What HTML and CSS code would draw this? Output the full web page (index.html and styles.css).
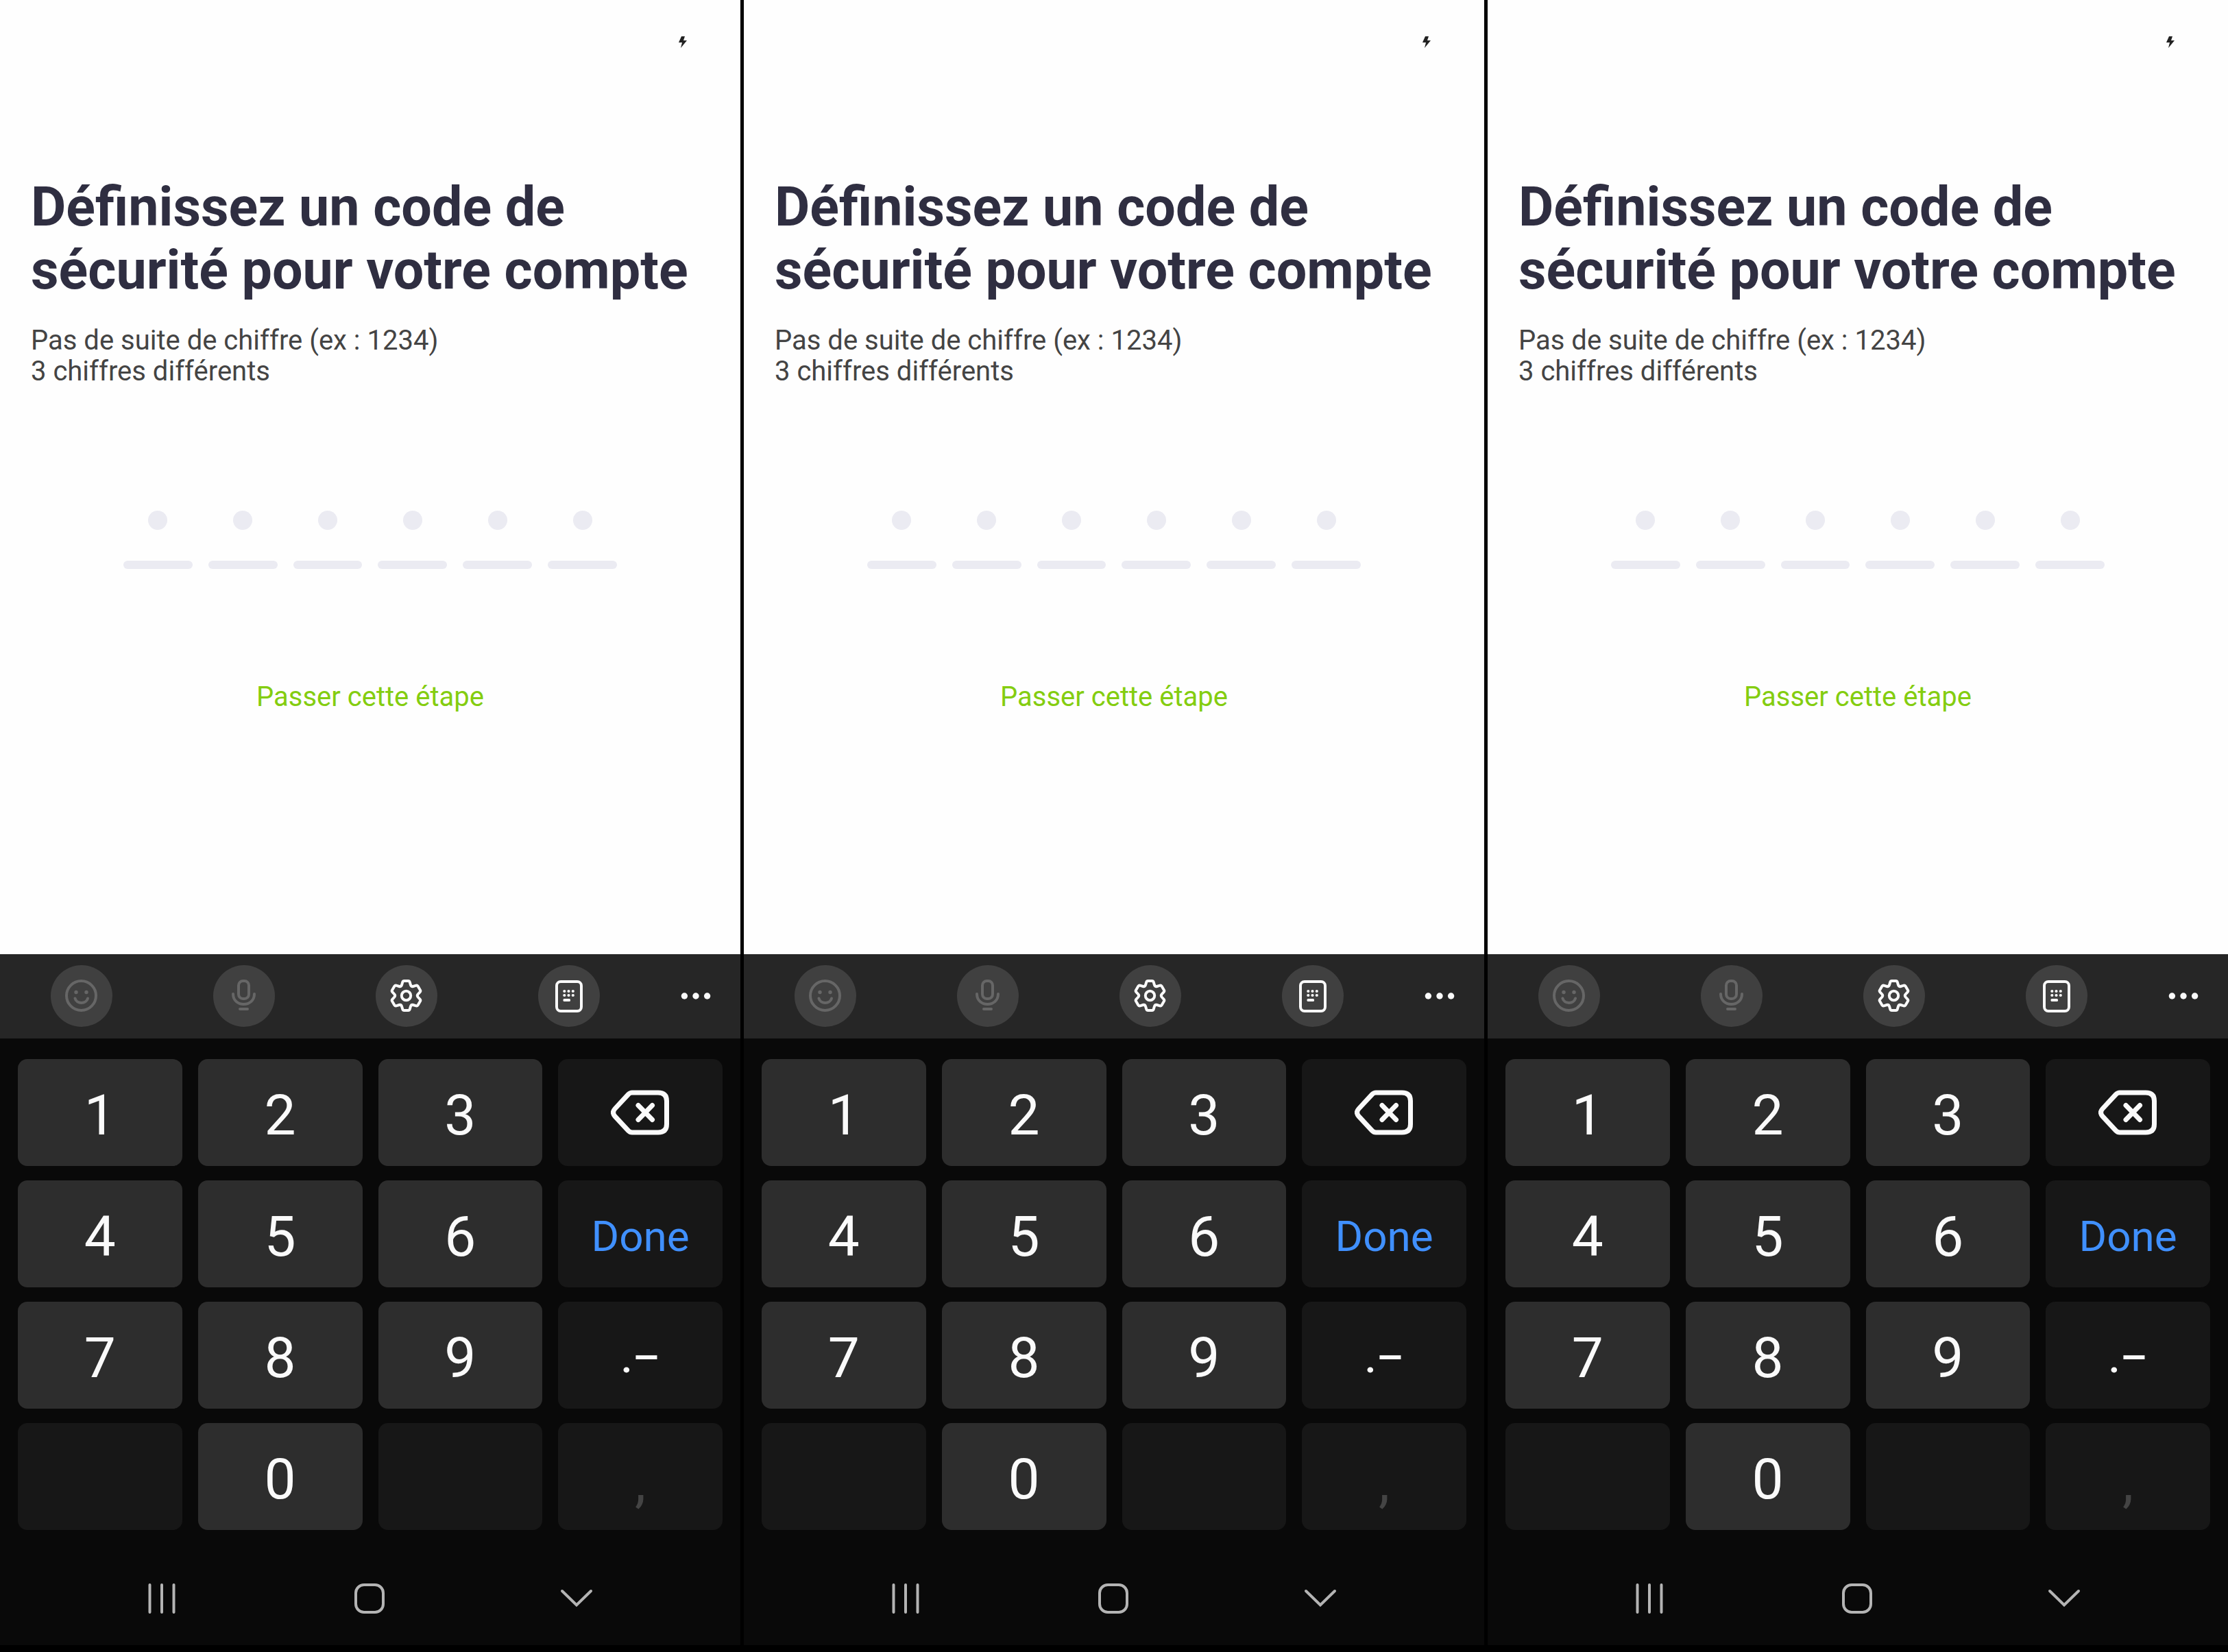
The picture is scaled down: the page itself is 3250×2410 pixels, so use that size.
FILE: index.html
```html
<!DOCTYPE html>
<html lang="fr">
<head>
<meta charset="utf-8">
<meta name="viewport" content="width=device-width, initial-scale=1">
<title>Code de sécurité</title>
<link rel="stylesheet" href="styles.css">
</head>
<body>
<svg class="sprite" aria-hidden="true">
  <symbol id="bolt" viewBox="0 0 12 17"><path d="M4 0H9L7 6H12L3 17L5 9H0Z" fill="#222"/></symbol>
  <symbol id="smile" viewBox="0 0 90 90"><g fill="none" stroke="#666" stroke-width="4" stroke-linecap="round"><circle cx="44.5" cy="44.5" r="21.5"/><path d="M35.5 48.5C37.5 57 52 57 54 48.5"/></g><g fill="#666"><circle cx="37" cy="39.5" r="2.7"/><circle cx="52" cy="39.5" r="2.7"/></g></symbol>
  <symbol id="mic" viewBox="0 0 90 90"><g fill="none" stroke="#666" stroke-width="4" stroke-linecap="round"><rect x="37" y="23" width="15" height="26" rx="6.5"/><path d="M29 42C29 62 60 62 60 42M39 64H50"/></g></symbol>
  <symbol id="gear" viewBox="0 0 90 90"><g fill="none" stroke="#fafafa" stroke-width="4" stroke-linejoin="round"><path d="M41.5 23H47.5Q49.2 23 49.7 24.6L51 29Q52 31.6 54.6 31L59 29.6Q60.6 29.2 61.5 30.6L65 36.6Q65.8 38 64.7 39.2L61.6 42.5Q60 44.5 61.6 46.5L64.7 49.8Q65.8 51 65 52.4L61.5 58.4Q60.6 59.8 59 59.4L54.6 58Q52 57.4 51 60L49.7 64.4Q49.2 66 47.5 66H41.5Q39.8 66 39.3 64.4L38 60Q37 57.4 34.4 58L30 59.4Q28.4 59.8 27.5 58.4L24 52.4Q23.2 51 24.3 49.8L27.4 46.5Q29 44.5 27.4 42.5L24.3 39.2Q23.2 38 24 36.6L27.5 30.6Q28.4 29.2 30 29.6L34.4 31Q37 31.6 38 29L39.3 24.6Q39.8 23 41.5 23Z"/><circle cx="44.5" cy="44.5" r="6.7"/></g></symbol>
  <symbol id="pad" viewBox="0 0 90 90"><rect x="27" y="24" width="36" height="43" rx="6" fill="none" stroke="#fafafa" stroke-width="4"/><g fill="#fafafa"><circle cx="38.3" cy="38" r="2.1"/><circle cx="44.5" cy="38" r="2.1"/><circle cx="50.8" cy="38" r="2.1"/><circle cx="38.3" cy="44" r="2.1"/><circle cx="44.5" cy="44" r="2.1"/><circle cx="50.8" cy="44" r="2.1"/><rect x="36.5" y="49" width="10.5" height="4" rx="1.5"/></g></symbol>
  <symbol id="dots" viewBox="0 0 44 12"><g fill="#fafafa"><circle cx="5.4" cy="6" r="4.7"/><circle cx="22" cy="6" r="4.7"/><circle cx="38.6" cy="6" r="4.7"/></g></symbol>
  <symbol id="erase" viewBox="0 0 86 66"><g fill="none" stroke="#fafafa" stroke-linecap="round" stroke-linejoin="round"><path stroke-width="7" d="M31 4H69Q81.500 4 81.500 16V50Q81.500 62 69 62H31Q28 62 25.500 59.500L6 38.500Q1 33 6 27.500L25.500 6.500Q28 4 31 4Z"/><path stroke-width="7" d="M40 22.500L60.500 43.500M60.500 22.500L40 43.500"/></g></symbol>
  <symbol id="recents" viewBox="0 0 48 44"><path d="M6.500 2V42M24 2V42M41.500 2V42" stroke="#b4b4b4" stroke-width="4" stroke-linecap="round"/></symbol>
  <symbol id="home" viewBox="0 0 48 44"><rect x="4" y="2" width="40" height="40" rx="12" fill="none" stroke="#b4b4b4" stroke-width="4"/></symbol>
  <symbol id="hide" viewBox="0 0 48 44"><path d="M3 11L24 31.500L45 11" fill="none" stroke="#b4b4b4" stroke-width="4" stroke-linecap="round"/></symbol>
</svg>

<main class="phone">
  <section class="app">
    <div class="status"><svg class="bolt"><use href="#bolt"/></svg></div>
    <h1 class="title">Définissez un code de sécurité pour votre compte</h1>
    <p class="rules">Pas de suite de chiffre (ex : 1234)<br>3 chiffres différents</p>
    <div class="code">
      <label class="cell"><span class="dot"></span><input class="bar" aria-label="Chiffre 1" inputmode="numeric" maxlength="1"></label>
      <label class="cell"><span class="dot"></span><input class="bar" aria-label="Chiffre 2" inputmode="numeric" maxlength="1"></label>
      <label class="cell"><span class="dot"></span><input class="bar" aria-label="Chiffre 3" inputmode="numeric" maxlength="1"></label>
      <label class="cell"><span class="dot"></span><input class="bar" aria-label="Chiffre 4" inputmode="numeric" maxlength="1"></label>
      <label class="cell"><span class="dot"></span><input class="bar" aria-label="Chiffre 5" inputmode="numeric" maxlength="1"></label>
      <label class="cell"><span class="dot"></span><input class="bar" aria-label="Chiffre 6" inputmode="numeric" maxlength="1"></label>
    </div>
    <button class="skip">Passer cette étape</button>
  </section>
  <section class="keyboard">
    <div class="toolbar">
      <div class="tools">
        <button class="tool" aria-label="Emoji"><svg><use href="#smile"/></svg></button>
        <button class="tool" aria-label="Micro"><svg><use href="#mic"/></svg></button>
        <button class="tool" aria-label="Réglages"><svg><use href="#gear"/></svg></button>
        <button class="tool" aria-label="Clavier"><svg><use href="#pad"/></svg></button>
      </div>
      <button class="more" aria-label="Plus"><svg><use href="#dots"/></svg></button>
    </div>
    <div class="keys">
      <button class="key">1</button><button class="key">2</button><button class="key">3</button>
      <button class="key dark" aria-label="Effacer"><svg class="erase"><use href="#erase"/></svg></button>
      <button class="key">4</button><button class="key">5</button><button class="key">6</button>
      <button class="key dark done">Done</button>
      <button class="key">7</button><button class="key">8</button><button class="key">9</button>
      <button class="key dark sign">.–</button>
      <button class="key dark" disabled></button><button class="key">0</button><button class="key dark" disabled></button>
      <button class="key dark comma" disabled>,</button>
    </div>
    <nav class="nav">
      <button class="navkey" aria-label="Récents"><svg><use href="#recents"/></svg></button>
      <button class="navkey" aria-label="Accueil"><svg><use href="#home"/></svg></button>
      <button class="navkey" aria-label="Masquer"><svg><use href="#hide"/></svg></button>
    </nav>
  </section>
</main>

<main class="phone">
  <section class="app">
    <div class="status"><svg class="bolt"><use href="#bolt"/></svg></div>
    <h1 class="title">Définissez un code de sécurité pour votre compte</h1>
    <p class="rules">Pas de suite de chiffre (ex : 1234)<br>3 chiffres différents</p>
    <div class="code">
      <label class="cell"><span class="dot"></span><input class="bar" aria-label="Chiffre 1" inputmode="numeric" maxlength="1"></label>
      <label class="cell"><span class="dot"></span><input class="bar" aria-label="Chiffre 2" inputmode="numeric" maxlength="1"></label>
      <label class="cell"><span class="dot"></span><input class="bar" aria-label="Chiffre 3" inputmode="numeric" maxlength="1"></label>
      <label class="cell"><span class="dot"></span><input class="bar" aria-label="Chiffre 4" inputmode="numeric" maxlength="1"></label>
      <label class="cell"><span class="dot"></span><input class="bar" aria-label="Chiffre 5" inputmode="numeric" maxlength="1"></label>
      <label class="cell"><span class="dot"></span><input class="bar" aria-label="Chiffre 6" inputmode="numeric" maxlength="1"></label>
    </div>
    <button class="skip">Passer cette étape</button>
  </section>
  <section class="keyboard">
    <div class="toolbar">
      <div class="tools">
        <button class="tool" aria-label="Emoji"><svg><use href="#smile"/></svg></button>
        <button class="tool" aria-label="Micro"><svg><use href="#mic"/></svg></button>
        <button class="tool" aria-label="Réglages"><svg><use href="#gear"/></svg></button>
        <button class="tool" aria-label="Clavier"><svg><use href="#pad"/></svg></button>
      </div>
      <button class="more" aria-label="Plus"><svg><use href="#dots"/></svg></button>
    </div>
    <div class="keys">
      <button class="key">1</button><button class="key">2</button><button class="key">3</button>
      <button class="key dark" aria-label="Effacer"><svg class="erase"><use href="#erase"/></svg></button>
      <button class="key">4</button><button class="key">5</button><button class="key">6</button>
      <button class="key dark done">Done</button>
      <button class="key">7</button><button class="key">8</button><button class="key">9</button>
      <button class="key dark sign">.–</button>
      <button class="key dark" disabled></button><button class="key">0</button><button class="key dark" disabled></button>
      <button class="key dark comma" disabled>,</button>
    </div>
    <nav class="nav">
      <button class="navkey" aria-label="Récents"><svg><use href="#recents"/></svg></button>
      <button class="navkey" aria-label="Accueil"><svg><use href="#home"/></svg></button>
      <button class="navkey" aria-label="Masquer"><svg><use href="#hide"/></svg></button>
    </nav>
  </section>
</main>

<main class="phone">
  <section class="app">
    <div class="status"><svg class="bolt"><use href="#bolt"/></svg></div>
    <h1 class="title">Définissez un code de sécurité pour votre compte</h1>
    <p class="rules">Pas de suite de chiffre (ex : 1234)<br>3 chiffres différents</p>
    <div class="code">
      <label class="cell"><span class="dot"></span><input class="bar" aria-label="Chiffre 1" inputmode="numeric" maxlength="1"></label>
      <label class="cell"><span class="dot"></span><input class="bar" aria-label="Chiffre 2" inputmode="numeric" maxlength="1"></label>
      <label class="cell"><span class="dot"></span><input class="bar" aria-label="Chiffre 3" inputmode="numeric" maxlength="1"></label>
      <label class="cell"><span class="dot"></span><input class="bar" aria-label="Chiffre 4" inputmode="numeric" maxlength="1"></label>
      <label class="cell"><span class="dot"></span><input class="bar" aria-label="Chiffre 5" inputmode="numeric" maxlength="1"></label>
      <label class="cell"><span class="dot"></span><input class="bar" aria-label="Chiffre 6" inputmode="numeric" maxlength="1"></label>
    </div>
    <button class="skip">Passer cette étape</button>
  </section>
  <section class="keyboard">
    <div class="toolbar">
      <div class="tools">
        <button class="tool" aria-label="Emoji"><svg><use href="#smile"/></svg></button>
        <button class="tool" aria-label="Micro"><svg><use href="#mic"/></svg></button>
        <button class="tool" aria-label="Réglages"><svg><use href="#gear"/></svg></button>
        <button class="tool" aria-label="Clavier"><svg><use href="#pad"/></svg></button>
      </div>
      <button class="more" aria-label="Plus"><svg><use href="#dots"/></svg></button>
    </div>
    <div class="keys">
      <button class="key">1</button><button class="key">2</button><button class="key">3</button>
      <button class="key dark" aria-label="Effacer"><svg class="erase"><use href="#erase"/></svg></button>
      <button class="key">4</button><button class="key">5</button><button class="key">6</button>
      <button class="key dark done">Done</button>
      <button class="key">7</button><button class="key">8</button><button class="key">9</button>
      <button class="key dark sign">.–</button>
      <button class="key dark" disabled></button><button class="key">0</button><button class="key dark" disabled></button>
      <button class="key dark comma" disabled>,</button>
    </div>
    <nav class="nav">
      <button class="navkey" aria-label="Récents"><svg><use href="#recents"/></svg></button>
      <button class="navkey" aria-label="Accueil"><svg><use href="#home"/></svg></button>
      <button class="navkey" aria-label="Masquer"><svg><use href="#hide"/></svg></button>
    </nav>
  </section>
</main>
</body>
</html>
```
FILE: styles.css
```css
* { box-sizing: border-box; margin: 0; padding: 0; }

body {
  display: grid;
  grid-template-columns: repeat(3, 1fr);
  gap: 5px;
  min-height: 100vh;
  padding-bottom: 10px;
  background: #000;
  font-family: Roboto, sans-serif;
}

button, input { border: 0; background: none; font-family: inherit; }
svg { display: block; }
.sprite { display: none; }

.phone { display: flex; flex-direction: column; min-width: 0; }

.app {
  display: flex;
  flex-direction: column;
  flex: 1;
  background: #fefefe;
}

.status {
  display: flex;
  justify-content: flex-end;
  padding: 53px 78px 0;
}
.bolt { width: 12px; height: 17px; }

.title {
  margin-top: 186px;
  padding: 0 45px;
  color: #2f2e41;
  font-size: 79px;
  font-weight: 700;
  line-height: 92px;
}

.rules {
  margin-top: 34px;
  padding: 0 45px;
  color: #444;
  font-size: 40px;
  line-height: 45px;
}

.code {
  display: flex;
  gap: 23px;
  margin-top: 181px;
  padding: 0 180px;
}
.cell {
  display: flex;
  flex: 1;
  flex-direction: column;
  align-items: center;
  gap: 45px;
  min-width: 0;
}
.dot { width: 28px; height: 28px; border-radius: 50%; background: #ebebf2; }
.bar { width: 100%; height: 12px; border-radius: 6px; background: #ebebf2; }

.skip {
  align-self: center;
  margin-top: 164px;
  color: #84cd10;
  font-size: 40px;
  line-height: 45px;
}

.keyboard { background: #090909; }

.toolbar {
  display: flex;
  align-items: center;
  justify-content: space-between;
  padding: 16px 43px 17px 74px;
  background: #262626;
}
.tools { display: flex; gap: 147px; }
.tool { width: 90px; height: 90px; border-radius: 50%; background: #404040; }
.tool svg { width: 90px; height: 90px; }
.more svg { width: 44px; height: 12px; }

.keys {
  display: grid;
  grid-template-columns: repeat(4, 1fr);
  grid-auto-rows: 156px;
  gap: 21px 23px;
  padding: 30px 26px 0;
}
.key {
  display: flex;
  align-items: center;
  justify-content: center;
  padding-top: 8px;
  border-radius: 14px;
  background: #2d2d2d;
  color: #fafafa;
  font-size: 82px;
}
.dark { padding-top: 0; background: #171717; }
.erase { width: 86px; height: 66px; }
.done { padding-top: 6px; color: #4090ff; font-size: 62px; }
.sign { padding-top: 6px; font-size: 62px; font-weight: 500; }
.comma { padding-top: 16px; color: #444; font-size: 82px; }

.nav {
  display: flex;
  justify-content: space-between;
  padding: 78px 215px 46px 212px;
}
.navkey svg { width: 48px; height: 44px; }
```
